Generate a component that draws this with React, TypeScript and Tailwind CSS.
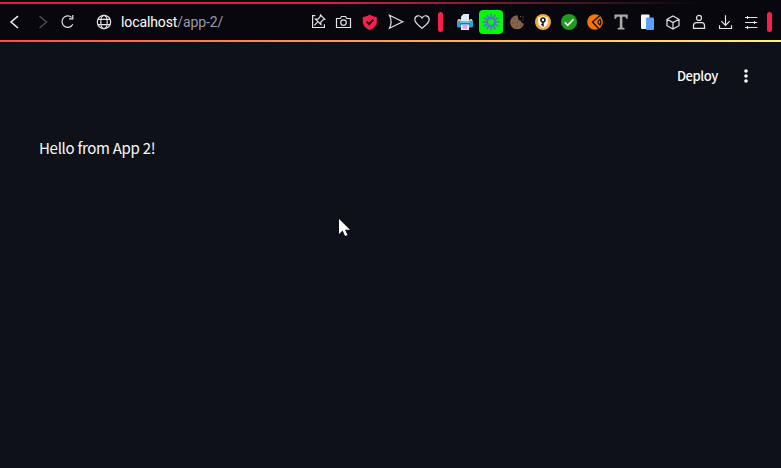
import type { ReactNode } from "react";

function Icon({ children }: { children: ReactNode }) {
  return (
    <svg
      className="h-[26px] w-[26px] shrink-0"
      viewBox="0 0 26 26"
      fill="none"
      stroke="#e4e3e8"
      strokeWidth="1.2"
    >
      {children}
    </svg>
  );
}

function Navigation() {
  return (
    <div className="flex items-center gap-0.5 pl-px">
      <Icon>
        <path d="M17 7.2L10 13l7 6" strokeWidth="1.5" stroke="#f4f3f7" />
      </Icon>
      <Icon>
        <path d="M10.5 7.2L17.5 13l-7 6" stroke="#4c4b52" strokeWidth="1.5" />
      </Icon>
      <Icon>
        <path d="M14.6 8.4A5.7 5.7 0 1 0 15.8 15.2M15.8 6v3.8H12" strokeWidth="1.2" />
      </Icon>
    </div>
  );
}

function Address() {
  return (
    <div className="flex items-center">
      <Icon>
        <circle cx="13" cy="13" r="6.7" />
        <ellipse cx="13" cy="13" rx="3.2" ry="6.7" />
        <path d="M7 10.4h12M7 15.6h12" />
      </Icon>
      <span className="ml-1 whitespace-nowrap font-['Roboto',sans-serif] text-[14px] leading-5 tracking-[-0.1px] text-white">
        localhost<span className="text-[#9d97ad]">/app-2/</span>
      </span>
    </div>
  );
}

function Divider() {
  return <div className="mx-[3px] h-5 w-[5px] rounded-sm bg-[#fa1e4e]" />;
}

function PageActions() {
  return (
    <div className="flex items-center">
      <Icon>
        <path d="M10.3 6.7H7.6v11.8h11.8v-3.2" />
        <path d="M15.5 6l4.3 4.3-1.6.4-2.4 2.4.1 2.4-5.4-5.4 2.5 0 2.2-2.4zM12.7 12.9l-3.3 3.4" strokeWidth="1.2" />
      </Icon>
      <Icon>
        <path d="M5.5 9.5h3.7L10.5 7.5h4l1.3 2h3.7v9h-14z" />
        <circle cx="12.5" cy="13.6" r="2.8" />
      </Icon>
      <Icon>
        <path d="M12.8 5.4c2 1.5 4.4 2.2 7 2.5v5c0 3.7-3.7 6.7-7 8.1-3.3-1.4-7-4.4-7-8.1v-5c2.6-.3 5-1 7-2.5z" fill="#fa1e4e" stroke="none" />
        <path d="M9.7 12.7l2.3 2.4 4.3-4.5" stroke="#090812" strokeWidth="1.8" />
      </Icon>
      <Icon>
        <path d="M6.5 6.3L19.7 12.8 6.5 19.3q3.2-6.5 0-13z" />
      </Icon>
      <Icon>
        <path d="M13 19.2C9.3 16.2 5.8 14 5.8 10.5c0-4 5.2-5.2 7.2-1.5 2-3.7 7.2-2.5 7.2 1.5 0 3.5-3.5 5.7-7.2 8.7z" />
      </Icon>
      <Divider />
    </div>
  );
}

const rays = Array.from({ length: 12 }, (_, i) => i * 30);

function Extensions() {
  return (
    <div className="flex items-center">
      <Icon>
        <g stroke="none">
          <rect x="5" y="10.5" width="16" height="8" rx="1.5" fill="#2ba3dd" />
          <path d="M8 11h10v4H8z" fill="#5cc6ef" />
          <path d="M11.5 5H17v7H9V7.5z" fill="#dcedf8" />
          <path d="M8 14.2h10v1.5H8z" fill="#1b6394" />
          <path d="M9 15.5h8V21H9z" fill="#f2eff7" />
          <path d="M10.5 16.5h5v1h-5z" fill="#c8539d" />
          <path d="M10.5 18.5h5v1h-5z" fill="#bf78cf" />
          <path d="M6 10h2.5v2H6zM18 10h2v2h-2z" fill="#e2c06d" />
        </g>
      </Icon>
      <Icon>
        <rect x="1" y="1" width="24" height="24" rx="4" fill="#00fa08" stroke="none" />
        <circle cx="13" cy="13" r="3.9" stroke="#5c6fd0" strokeWidth="2" />
        {rays.map((angle) => (
          <path key={angle} d="M13 4.6v4.4" transform={`rotate(${angle} 13 13)`} stroke="#5c6fd0" strokeWidth="1.7" />
        ))}
      </Icon>
      <Icon>
        <path d="M13.5 6.3L12 6.4A7 7 0 1 0 20 14.7l-2.2-.8-.8-2-2.5-1z" fill="#84644b" stroke="none" />
        <g fill="#5b4435" stroke="none">
          <circle cx="10.5" cy="9.5" r=".8" />
          <circle cx="9" cy="14" r=".8" />
          <circle cx="13.5" cy="13" r=".8" />
          <circle cx="13" cy="17.5" r=".8" />
          <circle cx="17" cy="16.5" r=".7" />
        </g>
        <path d="M16 7h1v1h-1zM18.5 7.5h1v1h-1zM18.5 10.5h1v1h-1z" fill="#84644b" stroke="none" />
      </Icon>
      <Icon>
        <circle cx="13" cy="13" r="8" fill="#f3aa3b" stroke="none" />
        <path d="M13 7.2l4.8 1.4v4.8c0 2.6-2.3 4.5-4.8 5.5-2.5-1-4.8-2.9-4.8-5.5V8.6z" fill="#fff" stroke="none" />
        <circle cx="13" cy="11" r="2" stroke="#17171b" strokeWidth="1.6" />
        <path d="M13 13v4.5M13 15.5h-1.8" stroke="#17171b" strokeWidth="1.5" />
      </Icon>
      <Icon>
        <circle cx="13" cy="13" r="8" fill="#23991f" stroke="none" />
        <path d="M8.7 13.4l3.1 2.9 5.7-6" stroke="#fff" strokeWidth="1.6" />
      </Icon>
      <Icon>
        <circle cx="13" cy="13" r="7.8" fill="#f87508" stroke="none" />
        <path d="M18 6.5L10.5 13l6.3 6.7" stroke="#17110f" strokeWidth="1.4" />
        <path d="M18 10.2q-4 2.8 0 5.9 1.8-2.8 0-5.9z" stroke="#17110f" strokeWidth="1.2" />
      </Icon>
      <Icon>
        <path d="M6.5 5.5h13.2v4.3h-1.6l-.7-2h-3v10.6l2.1.5v1.7H9.7v-1.7l2.1-.5V7.8h-3l-.7 2H6.5z" fill="#aaa9aa" stroke="none" />
      </Icon>
      <Icon>
        <rect x="7" y="5.5" width="8.5" height="14.5" rx="1" fill="#f6f7fa" stroke="none" />
        <rect x="12" y="8.5" width="8" height="12.5" rx="1" fill="#5aa0f5" stroke="none" />
      </Icon>
      <Icon>
        <path d="M13 7l6 3.3v6.4L13 20l-6-3.3v-6.4zM7 10.3l6 3.2 6-3.2M13 13.5V20" />
      </Icon>
      <Icon>
        <circle cx="13" cy="8.9" r="2.5" />
        <path d="M7.5 19.4v-2.8q0-3 3-3h5q3 0 3 3v2.8z" />
      </Icon>
      <Icon>
        <path d="M13.5 6.3v10M9.3 12.2l4.2 4.2 4.2-4.2M7.5 16.3v3.2h12v-3.2" />
      </Icon>
      <Icon>
        <path d="M7 8.5h12.3M7 13.5h12.3M7 18.5h12.3M9.5 7v3M16.5 12v3M9.5 17v3" strokeWidth="1.1" />
      </Icon>
      <Divider />
    </div>
  );
}

export default function App() {
  return (
    <div className="flex h-[468px] w-[781px] flex-col overflow-hidden bg-[#0e1118]">
      <header className="flex h-[42px] shrink-0 flex-col bg-[#08070d]">
        <div className="mt-0.5 h-0.5 shrink-0 bg-gradient-to-r from-[#ed1944] from-40% to-[#08070d] to-90%" />
        <div className="flex h-9 shrink-0 items-center pr-1.5">
          <Navigation />
          <div className="ml-2 flex flex-1">
            <Address />
          </div>
          <PageActions />
          <div className="w-[6px]" />
          <Extensions />
        </div>
        <div className="h-0.5 shrink-0 bg-gradient-to-r from-[#f94c4a] via-[#ffa05b] to-[#fff278]" />
      </header>
      <main className="flex flex-1 flex-col font-['Noto_Sans_CJK_SC',sans-serif] text-[#fafafa]">
        <div className="mt-[22px] flex h-6 items-center justify-end pr-[22px]">
          <span className="text-[13px] leading-6 font-medium tracking-[-0.4px]">Deploy</span>
          <svg className="ml-[15px] h-[26px] w-[26px]" viewBox="0 0 26 26" fill="#fafafa">
            <circle cx="13" cy="8" r="1.8" />
            <circle cx="13" cy="13" r="1.8" />
            <circle cx="13" cy="18" r="1.8" />
          </svg>
        </div>
        <p className="mt-12 ml-[39px] text-[15px] leading-6 tracking-[-0.3px]">Hello from App 2!</p>
        <svg className="mt-[58px] ml-[338px] h-[20px] w-[13px]" viewBox="0 0 13 20" fill="#fff">
          <path d="M1 1v15l3.6-3.5 2.5 5.5 2.4-1-2.5-5.3H12z" />
        </svg>
      </main>
    </div>
  );
}
